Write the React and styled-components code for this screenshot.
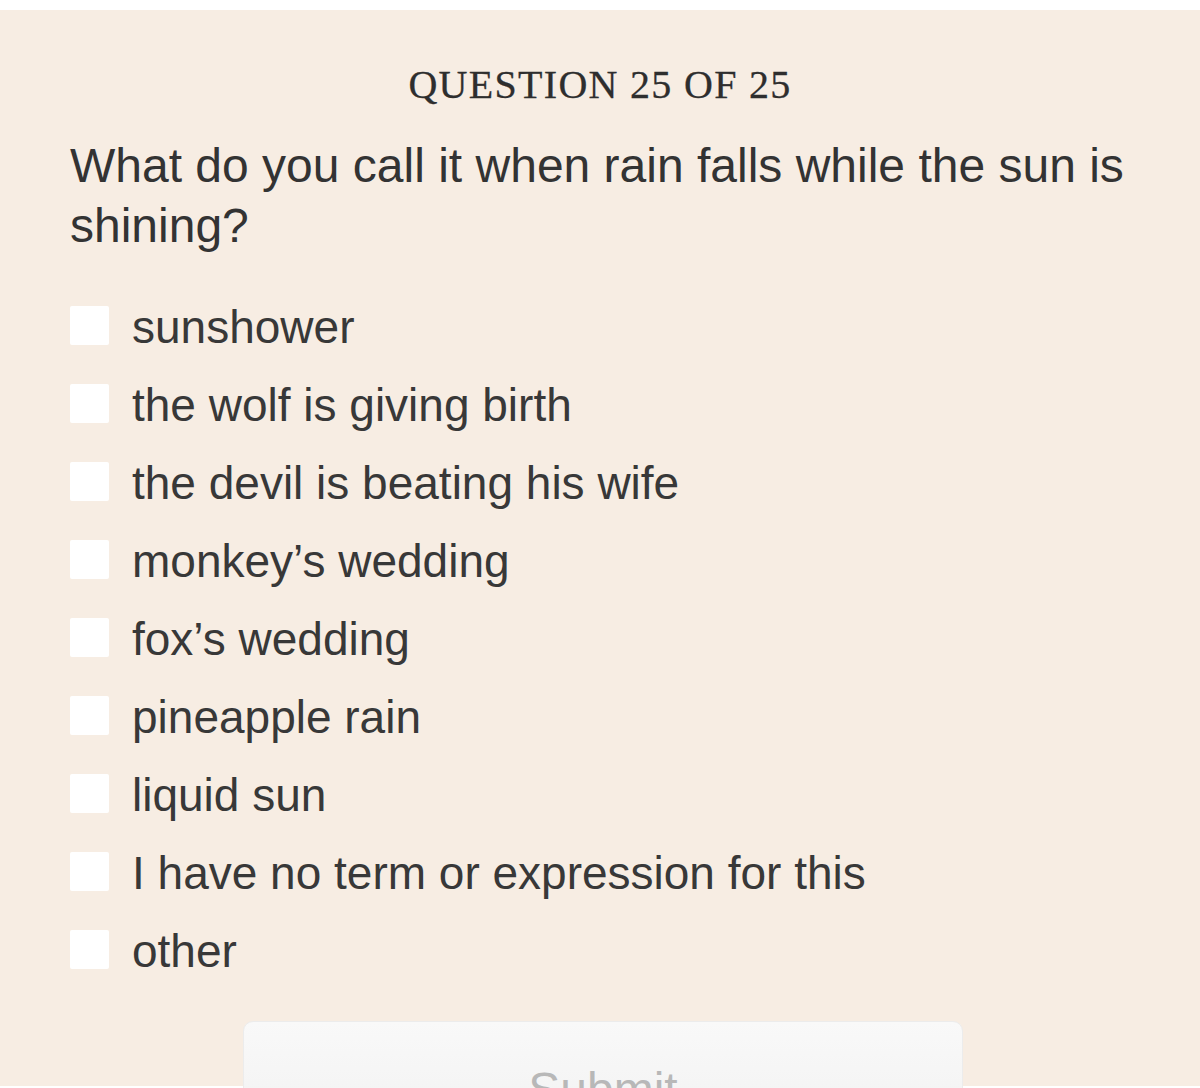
import React from "react";
import styled, { createGlobalStyle } from "styled-components";

const GlobalStyle = createGlobalStyle`
  html, body {
    margin: 0;
    padding: 0;
    background: #ffffff;
  }
  * {
    box-sizing: border-box;
  }
`;

const options = [
  "sunshower",
  "the wolf is giving birth",
  "the devil is beating his wife",
  "monkey’s wedding",
  "fox’s wedding",
  "pineapple rain",
  "liquid sun",
  "I have no term or expression for this",
  "other",
];

const App = () => {
  return (
    <Page>
      <GlobalStyle />
      <Panel>
        <Counter>Question 25 of 25</Counter>
        <Prompt>What do you call it when rain falls while the sun is shining?</Prompt>
        <OptionList>
          {options.map(label => (
            <OptionRow key={label}>
              <Box type="checkbox" />
              <OptionLabel>{label}</OptionLabel>
            </OptionRow>
          ))}
        </OptionList>
        <SubmitBtn disabled>Submit</SubmitBtn>
      </Panel>
    </Page>
  );
};

export default App;

const Page = styled.div`
  width: 1200px;
  height: 1088px;
  overflow: hidden;
  padding-top: 10px;
  background: #ffffff;
`;

const Panel = styled.div`
  height: 1076px;
  background: #f7ede3;
  padding: 55px 60px 0 70px;
`;

const Counter = styled.div`
  font-family: "Liberation Serif", "DejaVu Serif", serif;
  font-size: 40px;
  line-height: 40px;
  letter-spacing: 1.3px;
  text-transform: uppercase;
  text-align: center;
  color: #2e2e2e;
  padding-right: 10px;
  -webkit-text-stroke: 0.3px #2e2e2e;
`;

const Prompt = styled.h1`
  margin: 31px 0 0;
  font-family: "Liberation Sans", Arial, sans-serif;
  font-weight: 400;
  font-size: 48px;
  line-height: 60px;
  color: #333333;
`;

const OptionList = styled.div`
  margin-top: 44px;
  display: flex;
  flex-direction: column;
  gap: 28px;
`;

const OptionRow = styled.label`
  display: flex;
  align-items: center;
  gap: 23px;
  cursor: pointer;
`;

const Box = styled.input`
  appearance: none;
  margin: 0;
  width: 39px;
  height: 39px;
  flex: none;
  background: #ffffff;
  border: none;
  border-radius: 2px;
`;

const OptionLabel = styled.span`
  font-family: "Liberation Sans", Arial, sans-serif;
  font-size: 46px;
  line-height: 46px;
  padding-top: 4px;
  color: #383838;
`;

const SubmitBtn = styled.button`
  display: block;
  margin: 47px 0 0 173px;
  width: 720px;
  height: 110px;
  padding: 28px 0 0;
  border: 1px solid #ececec;
  border-radius: 10px;
  background: linear-gradient(#f9f9f9, #f2f2f2);
  font-family: "Liberation Sans", Arial, sans-serif;
  font-size: 48px;
  line-height: 48px;
  color: #b8b8b8;
  text-align: center;
  align-content: start;
`;
